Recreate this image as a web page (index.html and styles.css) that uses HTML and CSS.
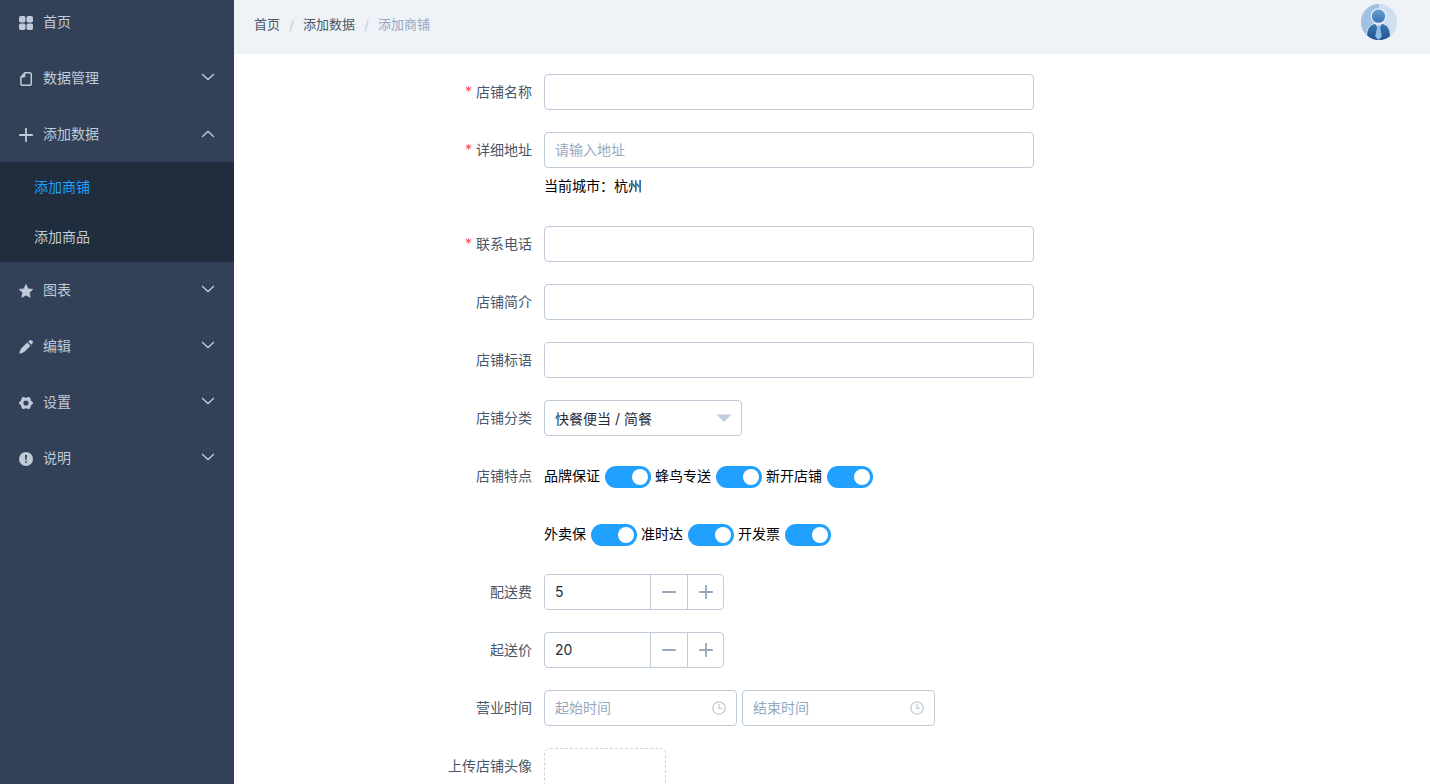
FILE: index.html
```html
<!DOCTYPE html>
<html lang="zh-CN">
<head>
<meta charset="utf-8">
<meta name="viewport" content="width=device-width, initial-scale=1">
<title>添加商铺</title>
<link rel="stylesheet" href="styles.css">
</head>
<body>
<svg class="defs" aria-hidden="true">
  <symbol id="down" viewBox="0 0 14 14"><path d="M1.5 4.5 7 9.5l5.500-5" fill="none" stroke="currentColor" stroke-width="1.400" stroke-linecap="round"/></symbol>
  <symbol id="up" viewBox="0 0 14 14"><path d="M1.500 9.500 7 4.500l5.500 5" fill="none" stroke="currentColor" stroke-width="1.400" stroke-linecap="round"/></symbol>
  <symbol id="plus" viewBox="0 0 14 14"><path d="M7 .8v12.400M.8 7h12.400" fill="none" stroke="currentColor" stroke-width="1.800" stroke-linecap="round"/></symbol>
  <symbol id="minus" viewBox="0 0 14 14"><path d="M.8 7h12.400" fill="none" stroke="currentColor" stroke-width="1.800" stroke-linecap="round"/></symbol>
  <symbol id="clock" viewBox="0 0 14 14"><g fill="none" stroke="currentColor" stroke-width="1.300" stroke-linecap="round"><circle cx="7" cy="7" r="6.200"/><path d="M7 3.500V7.300h2.700"/></g></symbol>
</svg>
<div class="layout">
  <nav class="sidebar" aria-label="主菜单">
    <a class="menu-item first" href="#"><svg class="icon" viewBox="0 0 14 14"><g fill="currentColor"><rect width="6.500" height="6.500" rx="1.800"/><rect x="7.500" width="6.500" height="6.500" rx="1.800"/><rect y="7.500" width="6.500" height="6.500" rx="1.800"/><rect x="7.500" y="7.500" width="6.500" height="6.500" rx="1.800"/></g></svg><span>首页</span></a>
    <button class="menu-item" type="button"><svg class="icon" viewBox="0 0 14 14"><path d="M5.800.8H10.500Q12.300.8 12.300 2.600V11.400Q12.300 13.200 10.500 13.200H3.700Q1.900 13.200 1.900 11.400V5.200Z" fill="none" stroke="currentColor" stroke-width="1.500" stroke-linejoin="round"/><path d="M6.300.7V3.900Q6.300 5.500 4.700 5.500H1.700Z" fill="currentColor"/></svg><span>数据管理</span><svg class="arrow"><use href="#down"/></svg></button>
    <button class="menu-item" type="button" aria-expanded="true"><svg class="icon"><use href="#plus"/></svg><span>添加数据</span><svg class="arrow open"><use href="#up"/></svg></button>
    <div class="submenu">
      <a class="sub-item active" href="#">添加商铺</a>
      <a class="sub-item" href="#">添加商品</a>
    </div>
    <button class="menu-item" type="button"><svg class="icon" viewBox="0 0 14 14"><path d="M7 .5 9 4.900l4.700.5-3.500 3.200 1 4.700L7 11l-4.200 2.300 1-4.700L.3 5.400 5 4.900Z" fill="currentColor" stroke="currentColor" stroke-width=".8" stroke-linejoin="round"/></svg><span>图表</span><svg class="arrow"><use href="#down"/></svg></button>
    <button class="menu-item" type="button"><svg class="icon" viewBox="0 0 14 14"><path d="M8.200 2.500 11.500 5.800 5.500 11.800Q3.500 13.400.3 13.700.7 10.500 2.200 8.500ZM9.200 1.700 10.500.6Q12-.4 13.400.8 14.500 2.200 13.400 3.600L12.300 4.800Z" fill="currentColor"/></svg><span>编辑</span><svg class="arrow"><use href="#down"/></svg></button>
    <button class="menu-item" type="button"><svg class="icon" viewBox="0 0 14 14"><path d="M3.500 1.200Q4.500.6 5.400 1.300 7 2.400 8.600 1.300 9.500.6 10.500 1.200 11.700 1.900 11.500 3.100 11.500 4.800 13 5.400 14 5.900 14 7T13 8.600Q11.500 9.200 11.500 10.900 11.700 12.100 10.500 12.800 9.500 13.400 8.600 12.700 7 11.600 5.400 12.700 4.500 13.400 3.500 12.800 2.300 12.100 2.500 10.900 2.500 9.200 1 8.600 0 8.100 0 7T1 5.400Q2.500 4.800 2.500 3.100 2.300 1.900 3.500 1.200ZM7 4.400a2.600 2.600 0 1 0 0 5.200 2.600 2.600 0 0 0 0-5.200Z" fill="currentColor" fill-rule="evenodd"/></svg><span>设置</span><svg class="arrow"><use href="#down"/></svg></button>
    <button class="menu-item" type="button"><svg class="icon" viewBox="0 0 14 14"><circle cx="7" cy="7" r="7" fill="currentColor"/><path d="M6 3h2L7.600 8.200H6.400Z" fill="#324157"/><circle cx="7" cy="10.200" r=".9" fill="#324157"/></svg><span>说明</span><svg class="arrow"><use href="#down"/></svg></button>
  </nav>
  <main class="content">
    <header class="header">
      <nav class="breadcrumb" aria-label="面包屑"><a href="#">首页</a><span class="sep">/</span><a href="#">添加数据</a><span class="sep">/</span><span class="current">添加商铺</span></nav>
      <svg class="avatar" viewBox="0 0 36 36" role="img" aria-label="头像">
        <defs><clipPath id="round"><circle cx="18" cy="18" r="18"/></clipPath><linearGradient id="head" x2="0" y2="1"><stop stop-color="#6a9fd2"/><stop offset="1" stop-color="#3a72b0"/></linearGradient><linearGradient id="suit" x2="0" y2="1"><stop stop-color="#3f7ab6"/><stop offset="1" stop-color="#1c4f8c"/></linearGradient></defs>
        <g clip-path="url(#round)"><path fill="#cfdff0" d="M0 0h36v36H0z"/><path fill="#a0c1e2" d="M0 0h18v36H0z"/>
        <path d="M5.500 37V32Q5.500 22 13 19.500H22Q29.500 22 29.500 32v5Z" fill="url(#suit)" stroke="#dce9f5" stroke-width="1"/><path d="m14 20 3.500 4 3.500-4Z" fill="#dce9f5"/><path d="M15.800 21.500h3.600l-.6 2.500 1.700 8.500-3 3-3-3 1.900-8.500Z" fill="#8fbce5" stroke="#b9d5ee" stroke-width=".5"/>
        <circle cx="17.500" cy="12.200" r="7.300" fill="url(#head)" stroke="#e3eef8" stroke-width="1.300"/></g>
      </svg>
    </header>
    <form class="form">
      <div class="row"><label class="label required" for="name">店铺名称</label><div class="field"><input class="input" id="name" type="text"></div></div>
      <div class="row"><label class="label required" for="address">详细地址</label><div class="field"><input class="input" id="address" type="text" placeholder="请输入地址"><div class="hint">当前城市：杭州</div></div></div>
      <div class="row"><label class="label required" for="phone">联系电话</label><div class="field"><input class="input" id="phone" type="tel"></div></div>
      <div class="row"><label class="label" for="intro">店铺简介</label><div class="field"><input class="input" id="intro" type="text"></div></div>
      <div class="row"><label class="label" for="slogan">店铺标语</label><div class="field"><input class="input" id="slogan" type="text"></div></div>
      <div class="row"><label class="label" for="category">店铺分类</label><div class="field"><div class="select-box"><select class="input select" id="category"><option>快餐便当 / 简餐</option></select><svg class="caret" viewBox="0 0 14 8"><path d="M1 .5h12q1 .3.500 1L8 7Q7 8 6 7L.5 1.500Q0 .8 1 .5Z" fill="currentColor"/></svg></div></div></div>
      <div class="row"><span class="label">店铺特点</span><div class="field switches">
        <label for="s1">品牌保证</label><input class="switch" id="s1" type="checkbox" role="switch" checked>
        <label for="s2">蜂鸟专送</label><input class="switch" id="s2" type="checkbox" role="switch" checked>
        <label for="s3">新开店铺</label><input class="switch" id="s3" type="checkbox" role="switch" checked></div></div>
      <div class="row"><span class="label"></span><div class="field switches">
        <label for="s4">外卖保</label><input class="switch" id="s4" type="checkbox" role="switch" checked>
        <label for="s5">准时达</label><input class="switch" id="s5" type="checkbox" role="switch" checked>
        <label for="s6">开发票</label><input class="switch" id="s6" type="checkbox" role="switch" checked></div></div>
      <div class="row"><label class="label" for="fee">配送费</label><div class="field"><div class="number"><input id="fee" type="text" inputmode="numeric" value="5"><button type="button" aria-label="减少"><svg><use href="#minus"/></svg></button><button type="button" aria-label="增加"><svg><use href="#plus"/></svg></button></div></div></div>
      <div class="row"><label class="label" for="min">起送价</label><div class="field"><div class="number"><input id="min" type="text" inputmode="numeric" value="20"><button type="button" aria-label="减少"><svg><use href="#minus"/></svg></button><button type="button" aria-label="增加"><svg><use href="#plus"/></svg></button></div></div></div>
      <div class="row"><label class="label" for="start">营业时间</label><div class="field times">
        <div class="time"><input class="input" id="start" type="text" placeholder="起始时间"><svg><use href="#clock"/></svg></div>
        <div class="time"><input class="input" id="end" type="text" placeholder="结束时间" aria-label="结束时间"><svg><use href="#clock"/></svg></div></div></div>
      <div class="row"><span class="label">上传店铺头像</span><div class="field"><button class="upload" type="button" aria-label="上传店铺头像"></button></div></div>
    </form>
  </main>
</div>
</body>
</html>
```
FILE: styles.css
```css
* { box-sizing: border-box; }
body {
  margin: 0;
  font-family: "Liberation Sans", "Noto Sans CJK SC", sans-serif;
  font-size: 14px;
  color: #000;
  background: #fff;
}
button, input, select { font: inherit; }
a { text-decoration: none; color: inherit; }
.defs { position: absolute; width: 0; height: 0; }

.layout { display: flex; height: 100vh; overflow: hidden; }

.sidebar { flex: 0 0 234px; background: #324157; color: #bfcbd9; line-height: 36px; }
.menu-item {
  display: flex;
  align-items: center;
  gap: 10px;
  width: 100%;
  height: 56px;
  padding: 0 19px;
  border: 0;
  background: none;
  color: inherit;
  text-align: left;
  cursor: pointer;
}
.menu-item.first { height: 50px; padding-bottom: 6px; }
.icon { width: 14px; height: 14px; flex: none; margin-top: 1px; }
.arrow { width: 14px; height: 14px; margin: 0 0 2px auto; }
.arrow.open { margin-bottom: 0; }
.submenu { background: #1f2d3d; }
.sub-item { display: flex; align-items: center; height: 50px; padding-left: 34px; }
.sub-item.active { color: #20a0ff; }

.content { flex: 1; min-width: 0; overflow-y: auto; scrollbar-width: none; }
.header {
  display: flex;
  justify-content: space-between;
  align-items: flex-start;
  height: 54px;
  padding: 4px 33px 0 20px;
  background: #eff2f7;
}
.breadcrumb { display: flex; font-size: 13px; line-height: 42px; color: #48576a; }
.sep { width: 23px; text-align: center; font-family: Inter, sans-serif; color: #bfcbd9; }
.current { color: #97a8be; }
.avatar { width: 36px; height: 36px; }

.form { width: 600px; max-width: 100%; margin: 20px 0 0 200px; }
.row { display: flex; margin-bottom: 22px; }
.label {
  flex: 0 0 110px;
  padding-right: 12px;
  line-height: 36px;
  text-align: right;
  color: #48576a;
}
.required::before { content: "*"; margin-right: 4px; font-family: Inter, sans-serif; line-height: 1; color: #ff4949; }
.field { flex: 1; min-width: 0; line-height: 36px; }
.input {
  display: block;
  width: 100%;
  height: 36px;
  padding: 0 10px;
  border: 1px solid #bfcbd9;
  border-radius: 4px;
  background: #fff;
  color: #1f2d3d;
}
.input::placeholder { color: #97a8be; }

.select-box { position: relative; width: 198px; }
.select { appearance: none; padding-bottom: 4px; font-family: Inter, "Noto Sans CJK SC", sans-serif; }
.caret { position: absolute; right: 11px; top: 14px; width: 14px; height: 8px; color: #bfcbd9; }

.switches { display: flex; align-items: center; gap: 4px; height: 36px; }
.switches label { margin-right: 1px; }
.switch {
  appearance: none;
  width: 46px;
  height: 22px;
  margin: 2px 0 0;
  padding: 3px;
  border-radius: 11px;
  background: #20a0ff;
}
.switch::before { content: ""; display: block; width: 16px; height: 16px; margin-left: auto; border-radius: 50%; background: #fff; }

.number { display: flex; width: 180px; height: 36px; border: 1px solid #bfcbd9; border-radius: 4px; }
.number input { flex: 1; min-width: 0; padding: 0 10px; border: 0; background: none; font-family: Inter, sans-serif; color: #1f2d3d; }
.number button {
  display: grid;
  place-items: center;
  width: 37px;
  padding: 0;
  border: 0;
  border-left: 1px solid #bfcbd9;
  background: none;
  color: #97a8be;
}
.number button:last-child { width: 36px; }
.number svg { width: 14px; height: 14px; }

.times { display: flex; gap: 5px; }
.time { position: relative; width: 193px; }
.time svg { position: absolute; right: 11px; top: 11px; width: 14px; height: 14px; color: #bfcbd9; }

.upload { display: block; width: 122px; height: 122px; border: 1px dashed #d0d5dc; border-radius: 6px; background: none; }
```
